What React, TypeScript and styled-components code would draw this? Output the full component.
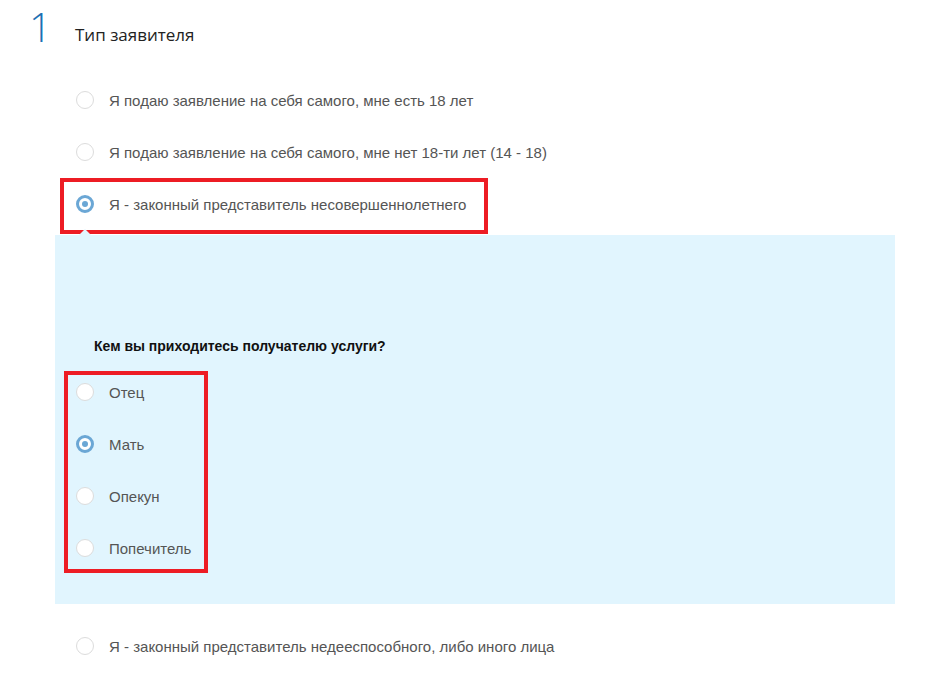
import React, { useState } from "react";
import styled, { createGlobalStyle, css } from "styled-components";

const GlobalStyle = createGlobalStyle`
  html, body {
    margin: 0;
    padding: 0;
    background: #ffffff;
  }
  body {
    font-family: "Liberation Sans", Arial, sans-serif;
  }
`;

const applicantOptions = [
  { id: "self-adult", label: "Я подаю заявление на себя самого, мне есть 18 лет" },
  { id: "self-minor", label: "Я подаю заявление на себя самого, мне нет 18-ти лет (14 - 18)" },
  { id: "minor-rep", label: "Я - законный представитель несовершеннолетнего" },
];

const relationOptions = ["Отец", "Мать", "Опекун", "Попечитель"];

const App: React.FC = () => {
  const [applicant, setApplicant] = useState("minor-rep");
  const [relation, setRelation] = useState("Мать");

  return (
    <>
      <GlobalStyle />
      <Page>
        <Header>
          <StepNumber>1</StepNumber>
          <Title>Тип заявителя</Title>
        </Header>

        <OptionList>
          {applicantOptions.map((option) => (
            <Option key={option.id} onClick={() => setApplicant(option.id)}>
              <Radio $checked={applicant === option.id} />
              <OptionLabel>{option.label}</OptionLabel>
              {option.id === "minor-rep" && <Highlight $width={428} $height={56} />}
            </Option>
          ))}
        </OptionList>

        <Panel>
          <Question>Кем вы приходитесь получателю услуги?</Question>
          <SubList>
            {relationOptions.map((item) => (
              <Option key={item} onClick={() => setRelation(item)}>
                <Radio $checked={relation === item} />
                <OptionLabel>{item}</OptionLabel>
              </Option>
            ))}
            <Highlight $width={144} $height={202} $top={5} $left={9} />
          </SubList>
        </Panel>

        <OptionList>
          <Option onClick={() => setApplicant("other-rep")}>
            <Radio $checked={applicant === "other-rep"} />
            <OptionLabel>Я - законный представитель недееспособного, либо иного лица</OptionLabel>
          </Option>
        </OptionList>
      </Page>
    </>
  );
};

const Page = styled.div`
  width: 927px;
  min-height: 686px;
  box-sizing: border-box;
`;

const Header = styled.div`
  display: flex;
  align-items: flex-start;
  height: 74px;
  padding-left: 29px;
`;

const StepNumber = styled.span`
  font-family: "Open Sans", sans-serif;
  font-weight: 300;
  font-size: 40px;
  line-height: 48px;
  margin-top: 3px;
  color: #1c6fb3;
  width: 46px;
`;

const Title = styled.h2`
  margin: 23px 0 0;
  font-family: "Open Sans", sans-serif;
  font-weight: 400;
  font-size: 17px;
  line-height: 24px;
  color: #222;
`;

const OptionList = styled.div`
  padding-left: 76px;
`;

const Option = styled.label`
  position: relative;
  display: flex;
  align-items: center;
  gap: 15px;
  height: 52px;
  cursor: pointer;
`;

const Radio = styled.span<{ $checked?: boolean }>`
  flex: none;
  width: 18px;
  height: 18px;
  border-radius: 50%;
  box-sizing: border-box;
  background: #fff;
  border: 1px solid #dcdcdc;
  position: relative;
  ${(p) =>
    p.$checked &&
    css`
      border: 3px solid #6ba7d5;
      &::after {
        content: "";
        position: absolute;
        left: 50%;
        top: 50%;
        width: 6px;
        height: 6px;
        margin: -3px 0 0 -3px;
        border-radius: 50%;
        background: #6ba7d5;
      }
    `}
`;

const OptionLabel = styled.span`
  font-size: 15px;
  color: #555;
`;

const Highlight = styled.span<{ $width: number; $height: number; $top?: number; $left?: number }>`
  position: absolute;
  top: ${(p) => p.$top ?? 0}px;
  left: ${(p) => p.$left ?? -16}px;
  width: ${(p) => p.$width}px;
  height: ${(p) => p.$height}px;
  box-sizing: border-box;
  border: 4px solid #ed1c24;
  pointer-events: none;
`;

const Panel = styled.div`
  position: relative;
  margin: 5px 0 16px 55px;
  width: 840px;
  box-sizing: border-box;
  padding: 101px 0 30px;
  background: #e1f5fe;
  &::before {
    content: "";
    position: absolute;
    top: -6px;
    left: 24px;
    border-left: 6px solid transparent;
    border-right: 6px solid transparent;
    border-bottom: 6px solid #e1f5fe;
  }
`;

const Question = styled.div`
  padding-left: 39px;
  font-size: 14px;
  font-weight: 700;
  line-height: 20px;
  color: #111;
  margin-bottom: 10px;
`;

const SubList = styled.div`
  position: relative;
  padding-left: 21px;
`;

export default App;
